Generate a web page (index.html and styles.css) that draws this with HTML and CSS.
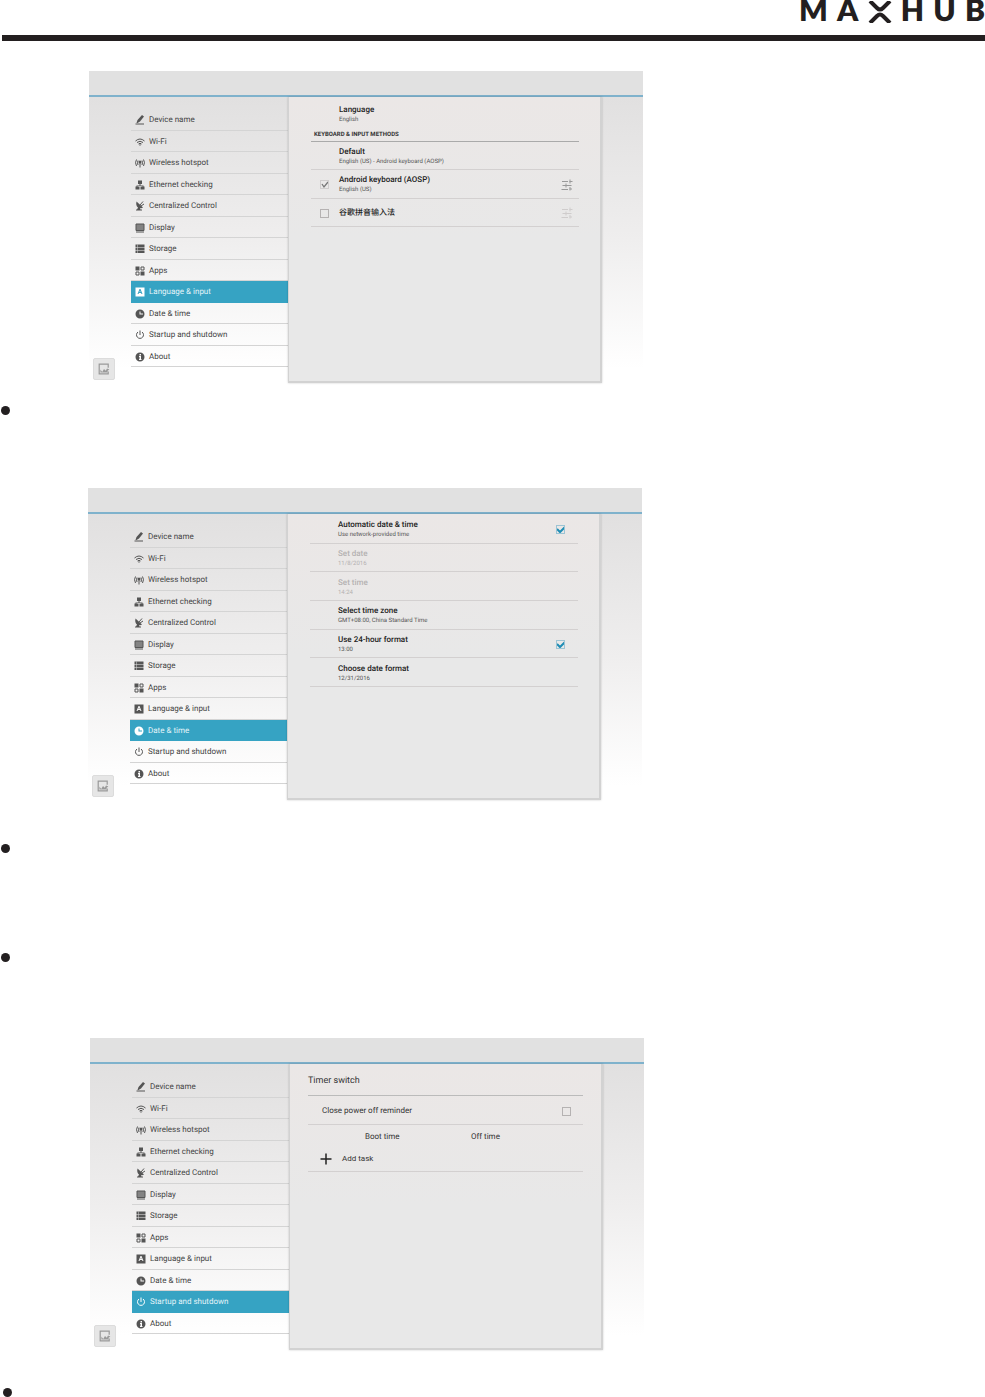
FILE: index.html
```
<!DOCTYPE html>
<html lang="en">
<head>
  <meta charset="UTF-8">
  <meta name="viewport" content="width=device-width, initial-scale=1">
  <title>MAXHUB - Settings</title>
  <link rel="stylesheet" href="styles.css">
</head>
<body>

  <!-- Shared icons -->
  <svg class="icon-defs" aria-hidden="true">
    <symbol id="i-edit" viewBox="0 0 20 20"><path d="M3 16l2-6L14 0l4 3-8 10-5 3zM1 17h17v2H1z" fill="currentColor"/></symbol>
    <symbol id="i-wifi" viewBox="0 0 20 20"><g fill="none" stroke="currentColor" stroke-width="2"><path d="M1 8q9-8 18 0M4 11q6-5 12 0M7 14q3-3 6 0"/></g><path d="M8 15h4l-2 3z" fill="currentColor"/></symbol>
    <symbol id="i-hotspot" viewBox="0 0 20 20"><g fill="none" stroke="currentColor" stroke-width="2"><path d="M3 3q-4 6 0 13M6 5q-2 4 0 9M17 3q4 6 0 13M14 5q2 4 0 9M10 9v10"/></g><circle cx="10" cy="8" r="3" fill="currentColor"/></symbol>
    <symbol id="i-ethernet" viewBox="0 0 20 20"><path d="M6 1h8v7h-3v3h6v2h2v6h-8v-6h4v-1H5v1h4v6H1v-6h2v-2h6V8H6z" fill="currentColor"/></symbol>
    <symbol id="i-control" viewBox="0 0 20 20"><path d="M3 1q-2 8 3 12l-2 4H2v2h12v-2h-3l-1-3q3 1 6-1z" fill="currentColor"/><path d="M10 8l6-7M12 10l6-4" stroke="currentColor" stroke-width="2"/></symbol>
    <symbol id="i-display" viewBox="0 0 20 20"><path d="M2 2h16v13H2z" fill="currentColor" fill-opacity=".7" stroke="currentColor" stroke-width="2"/><path d="M2 17h16v2H2z" fill="currentColor"/></symbol>
    <symbol id="i-storage" viewBox="0 0 20 20"><path d="M1 1h18v5H1zM1 7h18v5H1zM1 13h18v5H1z" fill="currentColor"/><path d="M5 1v17" stroke="#ddd"/></symbol>
    <symbol id="i-apps" viewBox="0 0 20 20"><path d="M1 1h8v8H1zM11 11h8v8h-8z" fill="currentColor"/><path d="M12 2h6v6h-6zM2 12h6v6H2z" fill="none" stroke="currentColor" stroke-width="2"/></symbol>
    <symbol id="i-language" viewBox="0 0 20 20"><path fill-rule="evenodd" d="M1 1h18v18H1zM9 4L5 14h2l1-2h4l1 2h2L11 4zM9 10l1-3 1 3z" fill="currentColor"/></symbol>
    <symbol id="i-clock" viewBox="0 0 20 20"><path fill-rule="evenodd" d="M10 1a9 9 0 1 0 0 18 9 9 0 0 0 0-18zM9 5h2v4h5v2H9z" fill="currentColor"/></symbol>
    <symbol id="i-power" viewBox="0 0 20 20"><path d="M6 4a7 7 0 1 0 8 0M10 1v9" fill="none" stroke="currentColor" stroke-width="2"/></symbol>
    <symbol id="i-about" viewBox="0 0 20 20"><path fill-rule="evenodd" d="M10 1a9 9 0 1 0 0 18 9 9 0 0 0 0-18zM9 4h3v3H9zM8 8h4v6h1v2H8v-2h1v-4H8z" fill="currentColor"/></symbol>
    <symbol id="i-sliders" viewBox="0 0 24 24"><path d="M2 5h12M3 13h18M1 21h13M17 5h6M17 20h5M18 1v8M10 9v8M18 16v7" fill="none" stroke="currentColor" stroke-width="2"/></symbol>
    <symbol id="i-image" viewBox="0 0 20 20"><path d="M17 8V2H2v16h15v-4" fill="none" stroke="currentColor" stroke-width="2"/><path d="M4 11l3 4 3-5 3 3 2-4 4 2-3 2v3H4z" fill="currentColor"/></symbol>
    <symbol id="i-plus" viewBox="0 0 24 24"><path d="M12 1v22M1 12h22" fill="none" stroke="currentColor" stroke-width="3"/></symbol>
  </svg>

  <header class="page-header">
    <div class="logo">
      <span>M</span>
      <span>A</span>
      <svg class="logo-mark" viewBox="0 0 24 22" role="img" aria-label="X"><path d="M2 0l7 7q3 3 6 0l7-7M2 22l7-7q3-3 6 0l7 7" fill="none" stroke="currentColor" stroke-width="4"/></svg>
      <span>H</span>
      <span>U</span>
      <span>B</span>
    </div>
  </header>

  <main>
    <!-- Language & input -->
    <section class="screen">
      <div class="topbar"></div>
      <div class="screen-body">
        <button class="shot-btn" aria-label="Screenshot"><svg class="icon"><use href="#i-image"/></svg></button>
        <nav class="menu">
          <a href="#"><svg class="icon"><use href="#i-edit"/></svg>Device name</a>
          <a href="#"><svg class="icon"><use href="#i-wifi"/></svg>Wi-Fi</a>
          <a href="#"><svg class="icon"><use href="#i-hotspot"/></svg>Wireless hotspot</a>
          <a href="#"><svg class="icon"><use href="#i-ethernet"/></svg>Ethernet checking</a>
          <a href="#"><svg class="icon"><use href="#i-control"/></svg>Centralized Control</a>
          <a href="#"><svg class="icon"><use href="#i-display"/></svg>Display</a>
          <a href="#"><svg class="icon"><use href="#i-storage"/></svg>Storage</a>
          <a href="#"><svg class="icon"><use href="#i-apps"/></svg>Apps</a>
          <a href="#" class="active"><svg class="icon"><use href="#i-language"/></svg>Language &amp; input</a>
          <a href="#"><svg class="icon"><use href="#i-clock"/></svg>Date &amp; time</a>
          <a href="#"><svg class="icon"><use href="#i-power"/></svg>Startup and shutdown</a>
          <a href="#"><svg class="icon"><use href="#i-about"/></svg>About</a>
        </nav>
        <div class="panel">
          <div class="row row-first">
            <div class="row-text"><h3>Language</h3><p>English</p></div>
          </div>
          <h2 class="group-title">KEYBOARD &amp; INPUT METHODS</h2>
          <div class="rows rows-3">
            <div class="row">
              <div class="row-text"><h3>Default</h3><p>English (US) - Android keyboard (AOSP)</p></div>
            </div>
            <div class="row">
              <input type="checkbox" id="aosp" class="check check-grey" checked>
              <label class="row-text" for="aosp"><span class="name">Android keyboard (AOSP)</span><span class="sub">English (US)</span></label>
              <button class="tune" aria-label="Keyboard settings"><svg><use href="#i-sliders"/></svg></button>
            </div>
            <div class="row">
              <input type="checkbox" id="pinyin" class="check">
              <label class="row-text" for="pinyin"><span class="name">谷歌拼音输入法</span></label>
              <button class="tune tune-off" aria-label="Pinyin settings"><svg><use href="#i-sliders"/></svg></button>
            </div>
          </div>
        </div>
      </div>
    </section>

    <ul class="notes">
      <li>
        <!-- Date & time -->
        <section class="screen">
          <div class="topbar"></div>
          <div class="screen-body">
            <button class="shot-btn" aria-label="Screenshot"><svg class="icon"><use href="#i-image"/></svg></button>
            <nav class="menu">
              <a href="#"><svg class="icon"><use href="#i-edit"/></svg>Device name</a>
              <a href="#"><svg class="icon"><use href="#i-wifi"/></svg>Wi-Fi</a>
              <a href="#"><svg class="icon"><use href="#i-hotspot"/></svg>Wireless hotspot</a>
              <a href="#"><svg class="icon"><use href="#i-ethernet"/></svg>Ethernet checking</a>
              <a href="#"><svg class="icon"><use href="#i-control"/></svg>Centralized Control</a>
              <a href="#"><svg class="icon"><use href="#i-display"/></svg>Display</a>
              <a href="#"><svg class="icon"><use href="#i-storage"/></svg>Storage</a>
              <a href="#"><svg class="icon"><use href="#i-apps"/></svg>Apps</a>
              <a href="#"><svg class="icon"><use href="#i-language"/></svg>Language &amp; input</a>
              <a href="#" class="active"><svg class="icon"><use href="#i-clock"/></svg>Date &amp; time</a>
              <a href="#"><svg class="icon"><use href="#i-power"/></svg>Startup and shutdown</a>
              <a href="#"><svg class="icon"><use href="#i-about"/></svg>About</a>
            </nav>
            <div class="panel">
              <div class="rows rows-6">
                <div class="row">
                  <label class="row-text" for="auto-date"><span class="name">Automatic date &amp; time</span><span class="sub">Use network-provided time</span></label>
                  <input type="checkbox" id="auto-date" class="check check-end check-blue" checked>
                </div>
                <div class="row disabled">
                  <div class="row-text"><h3>Set date</h3><p>11/8/2016</p></div>
                </div>
                <div class="row disabled">
                  <div class="row-text"><h3>Set time</h3><p>14:24</p></div>
                </div>
                <div class="row">
                  <div class="row-text"><h3>Select time zone</h3><p>GMT+08:00, China Standard Time</p></div>
                </div>
                <div class="row">
                  <label class="row-text" for="hour24"><span class="name">Use 24-hour format</span><span class="sub">13:00</span></label>
                  <input type="checkbox" id="hour24" class="check check-end check-blue" checked>
                </div>
                <div class="row">
                  <div class="row-text"><h3>Choose date format</h3><p>12/31/2016</p></div>
                </div>
              </div>
            </div>
          </div>
        </section>
      </li>
      <li></li>
      <li>
        <!-- Startup and shutdown -->
        <section class="screen">
          <div class="topbar"></div>
          <div class="screen-body">
            <button class="shot-btn" aria-label="Screenshot"><svg class="icon"><use href="#i-image"/></svg></button>
            <nav class="menu">
              <a href="#"><svg class="icon"><use href="#i-edit"/></svg>Device name</a>
              <a href="#"><svg class="icon"><use href="#i-wifi"/></svg>Wi-Fi</a>
              <a href="#"><svg class="icon"><use href="#i-hotspot"/></svg>Wireless hotspot</a>
              <a href="#"><svg class="icon"><use href="#i-ethernet"/></svg>Ethernet checking</a>
              <a href="#"><svg class="icon"><use href="#i-control"/></svg>Centralized Control</a>
              <a href="#"><svg class="icon"><use href="#i-display"/></svg>Display</a>
              <a href="#"><svg class="icon"><use href="#i-storage"/></svg>Storage</a>
              <a href="#"><svg class="icon"><use href="#i-apps"/></svg>Apps</a>
              <a href="#"><svg class="icon"><use href="#i-language"/></svg>Language &amp; input</a>
              <a href="#"><svg class="icon"><use href="#i-clock"/></svg>Date &amp; time</a>
              <a href="#" class="active"><svg class="icon"><use href="#i-power"/></svg>Startup and shutdown</a>
              <a href="#"><svg class="icon"><use href="#i-about"/></svg>About</a>
            </nav>
            <div class="panel panel-timer">
              <h2 class="timer-title">Timer switch</h2>
              <div class="timer-row">
                <label for="reminder">Close power off reminder</label>
                <input type="checkbox" id="reminder" class="check">
              </div>
              <table class="tasks">
                <tr><td class="tasks-pad"></td><th>Boot time</th><th>Off time</th></tr>
                <tr><td colspan="3"><button class="add-task"><svg><use href="#i-plus"/></svg>Add task</button></td></tr>
              </table>
            </div>
          </div>
        </section>
      </li>
      <li></li>
    </ul>
  </main>
</body>
</html>
```
FILE: styles.css
```
* {
  box-sizing: border-box;
}

body {
  margin: 0;
  background-color: #fff;
  color: #333;
  font-family: Roboto, "Noto Sans CJK SC", sans-serif;
  font-size: 8px;
  line-height: 10px;
  text-rendering: geometricPrecision;
}

h2, h3, p, ul {
  margin: 0;
  padding: 0;
}

button {
  padding: 0;
  border: none;
  background: none;
  color: inherit;
  font: inherit;
  cursor: pointer;
}

.icon-defs {
  display: none;
}

/* Header */
.page-header {
  display: flex;
  justify-content: flex-end;
  height: 41px;
  margin-left: 2px;
  border-bottom: 6px solid #231f20;
}

.logo {
  display: flex;
  justify-content: space-between;
  width: 186px;
  color: #231f20;
  font-family: Lato, sans-serif;
  font-size: 30px;
  font-weight: 800;
  line-height: 21px;
}

.logo-mark {
  width: 24px;
  height: 22px;
  margin-top: 1px;
}

/* Bulleted blocks */
.notes {
  margin-top: 23px;
  list-style: none;
}

.notes li {
  display: flex;
  min-height: 109px;
  padding-left: 1px;
}

.notes li::before {
  content: "";
  flex: none;
  width: 9px;
  height: 9px;
  border-radius: 50%;
  background-color: #231f20;
}

.notes li:last-child {
  min-height: 9px;
  padding-left: 3px;
}

.notes .screen {
  margin: 82px 0 44px 78px;
}

.notes li:nth-child(3) .screen {
  margin: 85px 0 38px 80px;
}

/* Settings screen */
.screen {
  width: 100%;
  max-width: 554px;
  margin: 30px 0 0 89px;
}

.topbar {
  height: 26px;
  background-color: #e1e1e1;
  border-bottom: 2px solid #7fb2cc;
}

.screen-body {
  display: grid;
  grid-template-columns: 42px 157px 1fr 41px;
  min-height: 286px;
  background: linear-gradient(#e1e0e0, #efeeee 50%, #fff 95%);
}

.icon {
  flex: none;
  width: 10px;
  height: 10px;
}

.shot-btn {
  display: flex;
  align-items: center;
  justify-content: center;
  align-self: end;
  width: 22px;
  height: 22px;
  margin: 0 0 3px 4px;
  border: 1px solid #dcdcdc;
  border-radius: 2px;
  background-color: #e6e6e6;
  color: #999;
}

.shot-btn .icon {
  width: 12px;
  height: 12px;
}

.menu {
  display: grid;
  grid-auto-rows: 1fr;
  padding: 12px 0 16px;
}

.menu a {
  display: flex;
  align-items: center;
  gap: 4px;
  padding: 2px 0 0 4px;
  border-bottom: 1px solid #d4d4d4;
  color: #444;
  text-decoration: none;
}

.menu .icon {
  color: #555;
}

.menu .active {
  border-color: #36a3c3;
  background-color: #36a3c3;
  color: #e4f4f9;
}

.menu .active .icon {
  color: #fff;
}

.panel {
  padding: 0 21px 0 22px;
  border: 1px solid #d2d2d2;
  border-width: 0 2px 2px 1px;
  background: linear-gradient(#ebe7e6, #e8e8e8 50%);
  box-shadow: 0 0 2px rgba(0, 0, 0, 0.2);
}

/* Preference rows */
.rows {
  display: grid;
  grid-auto-rows: 1fr;
}

.rows-3 {
  min-height: 85px;
}

.rows-6 {
  min-height: 172px;
  margin-top: 1px;
}

.row {
  display: flex;
  align-items: center;
  padding: 2px 6px 0 9px;
  border-bottom: 1px solid #d3d0d0;
}

.row-first {
  height: 33px;
  border: none;
}

.row-text {
  flex: 1;
  margin-left: 19px;
}

.check + .row-text {
  margin-left: 10px;
}

.name,
.sub {
  display: block;
}

.row h3,
.name {
  color: #222;
  font-size: 8px;
  font-weight: 500;
}

.row p,
.sub {
  color: #555;
  font-size: 6px;
  line-height: 9px;
}

.row.disabled h3,
.row.disabled p {
  color: #b5b2b2;
}

.group-title {
  padding: 0 0 1px 3px;
  border-bottom: 1px solid #aaa;
  color: #333;
  font-size: 6px;
  font-weight: 700;
}

.check {
  flex: none;
  appearance: none;
  width: 9px;
  height: 9px;
  margin: 0;
  border: 1px solid #b5b2b2;
  background: center / 9px 9px no-repeat;
}

.check-end {
  margin-right: 7px;
}

.check-grey:checked {
  border-color: #d0cdcd;
  background-image: url("data:image/svg+xml,%3Csvg xmlns='http://www.w3.org/2000/svg' viewBox='0 0 9 9'%3E%3Cpath d='M2 4l2 3 4-5' fill='none' stroke='%23777' stroke-width='1.3'/%3E%3C/svg%3E");
}

.check-blue:checked {
  border-color: #9cc4d4;
  background-image: url("data:image/svg+xml,%3Csvg xmlns='http://www.w3.org/2000/svg' viewBox='0 0 9 9'%3E%3Cpath d='M1 4l3 3 5-5' fill='none' stroke='%231f8db5' stroke-width='2'/%3E%3C/svg%3E");
}

.tune {
  display: flex;
  color: #999;
}

.tune svg {
  width: 12px;
  height: 12px;
}

.tune-off {
  color: #cfcccc;
}

/* Timer switch */
.panel-timer {
  padding: 0 18px;
}

.timer-title {
  padding: 12px 0 9px;
  border-bottom: 1px solid #bbb;
  font-size: 9px;
  font-weight: 400;
}

.timer-row {
  display: flex;
  align-items: center;
  justify-content: space-between;
  height: 29px;
  padding: 2px 12px 0 14px;
  border-bottom: 1px solid #d3d0d0;
}

.tasks {
  width: 100%;
  border-collapse: collapse;
  border-bottom: 1px solid #d3d0d0;
}

.tasks th,
.tasks td {
  height: 23px;
  padding: 0;
  font-weight: 400;
  text-align: left;
}

.tasks-pad {
  width: 57px;
}

.tasks th:nth-child(2) {
  width: 106px;
}

.add-task {
  display: flex;
  align-items: center;
  gap: 10px;
  margin-left: 12px;
}

.add-task svg {
  width: 12px;
  height: 12px;
  color: #222;
}
```
